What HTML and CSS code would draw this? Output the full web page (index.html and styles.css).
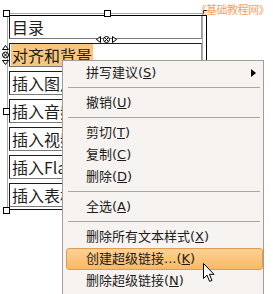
FILE: index.html
```html
<!DOCTYPE html>
<html lang="zh">
<head>
<meta charset="utf-8">
<link rel="stylesheet" href="styles.css">
</head>
<body>
<div class="page">
  <div class="editor">
    <div class="table">
      <div class="row"><span class="txt">目录</span></div>
      <div class="row"><span class="txt sel">对齐和背景</span></div>
      <div class="row"><span class="txt">插入图片</span></div>
      <div class="row"><span class="txt">插入音频</span></div>
      <div class="row"><span class="txt">插入视频</span></div>
      <div class="row"><span class="txt">插入Flash</span></div>
      <div class="row"><span class="txt">插入表格</span></div>
    </div>
    <div class="selframe"></div>
    <div class="handle h-tl"></div>
    <div class="handle h-tm"></div>
    <div class="handle h-ml"></div>
    <div class="handle h-bl"></div>
    <div class="corner-tr"></div>
    <svg class="rz rz-h" width="21" height="7" viewBox="0 0 21 7">
      <path d="M0.5 3.5 L4.5 0.5 L4.5 6.5 Z" fill="#fff" stroke="#000" stroke-width="1"/>
      <circle cx="10.5" cy="3.5" r="3" fill="#fff" stroke="#000" stroke-width="1"/>
      <path d="M8.6 1.6 L12.4 5.4 M12.4 1.6 L8.6 5.4" stroke="#000" stroke-width="1"/>
      <path d="M20.5 3.5 L16.5 0.5 L16.5 6.5 Z" fill="#fff" stroke="#000" stroke-width="1"/>
    </svg>
    <svg class="rz rz-v" width="7" height="20" viewBox="0 0 7 20">
      <path d="M3.5 0.5 L6.5 4.5 L0.5 4.5 Z" fill="#fff" stroke="#000" stroke-width="1"/>
      <circle cx="3.5" cy="10" r="3" fill="#fff" stroke="#000" stroke-width="1"/>
      <path d="M1.6 8.1 L5.4 11.9 M5.4 8.1 L1.6 11.9" stroke="#000" stroke-width="1"/>
      <path d="M3.5 19.5 L6.5 15.5 L0.5 15.5 Z" fill="#fff" stroke="#000" stroke-width="1"/>
    </svg>
  </div>

  <div class="watermark">《基础教程网》</div>

  <ul class="menu">
    <li class="item">拼写建议(<u>S</u>)<svg class="sub" width="5" height="8" viewBox="0 0 5 8"><path d="M0 0 L5 4 L0 8 Z" fill="#000"/></svg></li>
    <li class="sep"></li>
    <li class="item">撤销(<u>U</u>)</li>
    <li class="sep"></li>
    <li class="item">剪切(<u>T</u>)</li>
    <li class="item">复制(<u>C</u>)</li>
    <li class="item">删除(<u>D</u>)</li>
    <li class="sep"></li>
    <li class="item">全选(<u>A</u>)</li>
    <li class="sep"></li>
    <li class="item">删除所有文本样式(<u>X</u>)</li>
    <li class="item active">创建超级链接...(<u>K</u>)</li>
    <li class="item">删除超级链接(<u>N</u>)</li>
    <li class="item">&nbsp;</li>
  </ul>

  <svg class="cursor" width="13" height="20" viewBox="0 0 13 20">
    <path d="M0.5 0.5 L0.5 15.5 L4 12.2 L6.6 18.4 L9 17.4 L6.4 11.3 L11 11.3 Z" fill="#fff" stroke="#000" stroke-width="1" stroke-linejoin="miter"/>
  </svg>
</div>
</body>
</html>
```
FILE: styles.css
```css
html, body {
  margin: 0;
  padding: 0;
  background: #fff;
}
.page {
  position: relative;
  width: 273px;
  height: 294px;
  overflow: hidden;
  background: #fff;
}
.editor {
  position: relative;
  padding-top: 13px;
}
.table {
  margin-left: 7px;
  width: 196px;
  box-sizing: border-box;
  border: 1px solid #a8a8a8;
  border-bottom: 1px solid #111;
  padding: 1px 0 2px 1px;
  display: flex;
  flex-direction: column;
  gap: 4px;
}
.row {
  height: 24px;
  box-sizing: border-box;
  border-style: solid;
  border-width: 1px;
  border-color: #1e1e1e #9a9a9a #7a7a7a #1e1e1e;
  padding-left: 1px;
  display: flex;
  align-items: stretch;
  overflow: hidden;
  font-family: "Noto Sans CJK SC", "DejaVu Sans", sans-serif;
  font-size: 16px;
  color: #1e1e1e;
  white-space: nowrap;
}
.txt {
  display: block;
  line-height: 22px;
  padding: 0 1px;
}
.sel {
  background: #f8c77e;
}
.selframe {
  position: absolute;
  left: 9px;
  top: 15px;
  width: 197px;
  height: 195px;
  border-top: 1px solid #000;
  border-right: 1px solid #000;
  pointer-events: none;
}
.handle {
  position: absolute;
  width: 7px;
  height: 7px;
  box-sizing: border-box;
  border: 1px solid #000;
  background: #fff;
}
.h-tl { left: 3px; top: 10px; }
.h-tm { left: 104px; top: 10px; }
.h-ml { left: 3px; top: 108px; }
.h-bl { left: 3px; top: 207px; }
.corner-tr {
  position: absolute;
  left: 203px;
  top: 10px;
  width: 4px;
  height: 4px;
  box-sizing: border-box;
  border-top: 1px solid #000;
  border-left: 1px solid #000;
  background: #fff;
}
.rz {
  position: absolute;
  display: block;
}
.rz-h { left: 96px; top: 36px; }
.rz-v { left: 2px; top: 45px; }

.watermark {
  position: absolute;
  top: 1px;
  right: 4px;
  font-family: "Noto Sans CJK SC", sans-serif;
  font-size: 11px;
  letter-spacing: -0.5px;
  color: #f5a062;
  line-height: 16px;
}

.menu {
  position: absolute;
  left: 62px;
  top: 60px;
  width: 202px;
  box-sizing: border-box;
  margin: 0;
  padding: 1px 0 0 3px;
  list-style: none;
  background: #f7f3f1;
  border: 1px solid #a19d99;
  font-family: "DejaVu Sans", "Noto Sans CJK SC", sans-serif;
  font-size: 13px;
  color: #1c1c1c;
}
.item {
  height: 22px;
  box-sizing: border-box;
  border: 1px solid transparent;
  border-radius: 3px;
  padding-left: 19px;
  padding-right: 6px;
  display: flex;
  align-items: center;
  white-space: nowrap;
  line-height: 20px;
}
.item u {
  text-underline-offset: 1px;
}
.item.active {
  background: linear-gradient(#fdd193, #f9b965);
  border-color: #e09c52;
}
.sub {
  margin-left: auto;
  display: block;
}
.sep {
  height: 1px;
  background: #aaa6a2;
  margin: 3px 3px 4px 2px;
}
.cursor {
  position: absolute;
  left: 203px;
  top: 263px;
  display: block;
}
```
